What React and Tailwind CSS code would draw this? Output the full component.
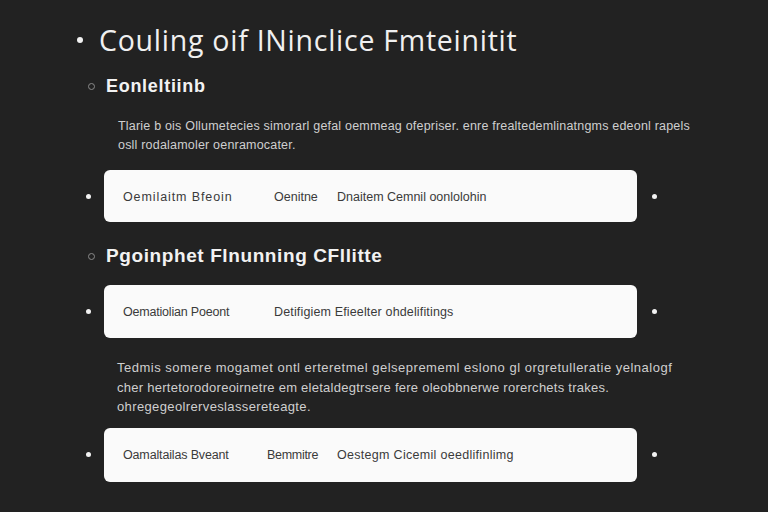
import React from "react";

function Dot() {
  return <div className="w-[5px] h-[5px] rounded-full bg-[#f2f2f2] shrink-0" />;
}

function CardRow({ cols, className = "", h = "h-[53px]" }) {
  return (
    <div className={`flex items-center ${className}`}>
      <div className="w-[18px] flex justify-start">
        <Dot />
      </div>
      <div className={`w-[533px] ${h} bg-[#fafafa] rounded-[6px] flex items-center pl-[19px] pt-[2px] text-[12.5px] text-[#3a3a3a] font-['Liberation_Sans',sans-serif] whitespace-nowrap`}>
        {cols.map((c, i) => (
          <div key={i} className={c.w}>
            {c.t}
          </div>
        ))}
      </div>
      <div className="w-[20px] flex justify-end">
        <Dot />
      </div>
    </div>
  );
}

export default function App() {
  return (
    <div className="w-[768px] min-h-[512px] bg-[#222222] font-['Liberation_Sans',sans-serif] overflow-hidden">
      <div className="flex items-center ml-[77px] pt-[22px] gap-[16px]">
        <div className="w-[6px] h-[6px] rounded-full bg-[#f2f2f2]" />
        <div className="text-[28.5px] leading-[36px] text-[#f0f0f0] tracking-[0.75px] font-['Open_Sans',sans-serif] whitespace-nowrap">
          Couling oif INinclice Fmteinitit
        </div>
      </div>

      <div className="flex items-center ml-[88px] mt-[16px] gap-[11px]">
        <div className="w-[7px] h-[7px] rounded-full border border-[#8a8a8a]" />
        <div className="text-[18px] leading-[24px] font-bold text-[#f2f2f2] tracking-[0.7px]">
          Eonleltiinb
        </div>
      </div>

      <div className="ml-[118px] mt-[19px] text-[12.5px] leading-[19px] text-[#cfcfcf] tracking-[0.2px] whitespace-nowrap">
        <div>Tlarie b ois Ollumetecies simorarl gefal oemmeag ofepriser. enre frealtedemlinatngms edeonl rapels</div>
        <div>osll rodalamoler oenramocater.</div>
      </div>

      <CardRow
        className="ml-[86px] mt-[15px]"
        h="h-[52px]"
        cols={[
          { t: "Oemilaitm Bfeoin", w: "w-[151px] tracking-[0.9px]" },
          { t: "Oenitne", w: "w-[63px]" },
          { t: "Dnaitem Cemnil oonlolohin", w: "" },
        ]}
      />

      <div className="flex items-center ml-[88px] mt-[21px] gap-[11px]">
        <div className="w-[7px] h-[7px] rounded-full border border-[#8a8a8a]" />
        <div className="text-[19px] leading-[26px] font-bold text-[#f2f2f2] tracking-[0.6px]">
          Pgoinphet Flnunning CFllitte
        </div>
      </div>

      <CardRow
        className="ml-[86px] mt-[16px]"
        cols={[
          { t: "Oematiolian Poeont", w: "w-[151px] tracking-[-0.2px]" },
          { t: "Detifigiem Efieelter ohdelifitings", w: "tracking-[0.15px]" },
        ]}
      />

      <div className="ml-[117px] mt-[20px] text-[13px] leading-[19.5px] text-[#cfcfcf] whitespace-nowrap">
        <div className="tracking-[0.5px]">Tedmis somere mogamet ontl erteretmel gelseprememl eslono gl orgretulleratie yelnalogf</div>
        <div className="tracking-[0.26px]">cher hertetorodoreoirnetre em eletaldegtrsere fere oleobbnerwe rorerchets trakes.</div>
        <div className="tracking-[0.37px]">ohregegeolrerveslassereteagte.</div>
      </div>

      <CardRow
        className="ml-[86px] mt-[11px]"
        h="h-[54px]"
        cols={[
          { t: "Oamaltailas Bveant", w: "w-[144px] tracking-[-0.15px]" },
          { t: "Bemmitre", w: "w-[70px] tracking-[-0.3px]" },
          { t: "Oestegm Cicemil oeedlifinlimg", w: "tracking-[0.3px]" },
        ]}
      />
    </div>
  );
}
